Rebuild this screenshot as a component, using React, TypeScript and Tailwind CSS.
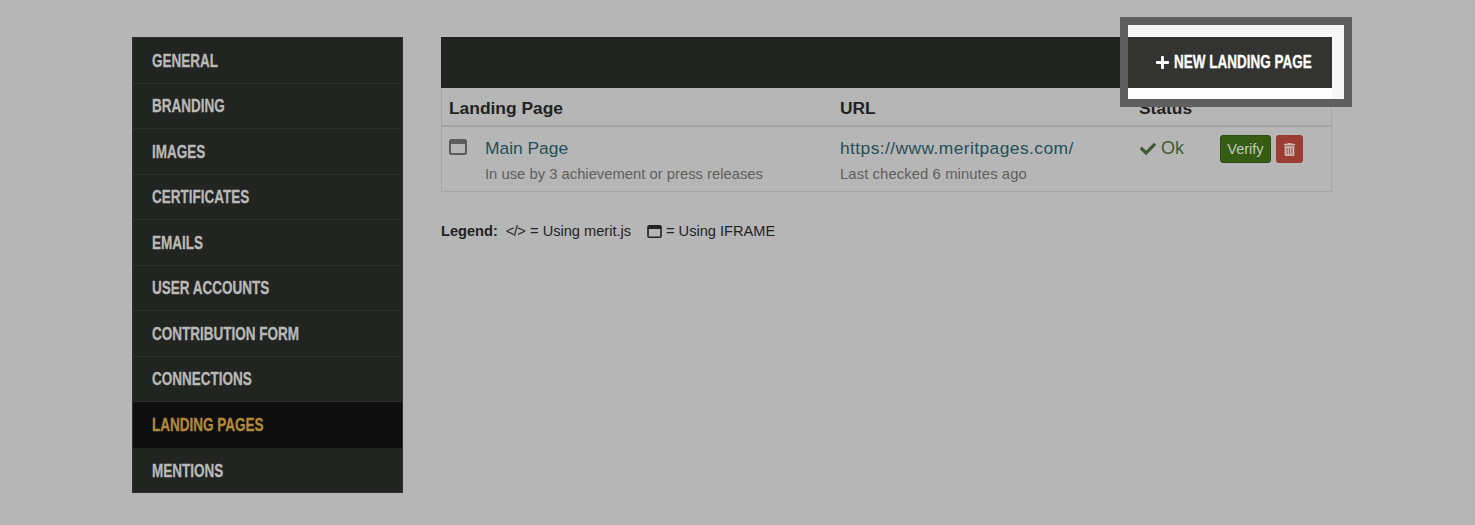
import { FaCheck, FaPlus, FaTrashAlt } from 'react-icons/fa'

const navItems = [
  'General',
  'Branding',
  'Images',
  'Certificates',
  'Emails',
  'User Accounts',
  'Contribution Form',
  'Connections',
  'Landing Pages',
  'Mentions',
]

// no condensed face is installed, so squeeze the bold one
const condensed =
  'inline-block origin-left scale-x-[0.75] whitespace-nowrap text-[18px] font-bold uppercase [-webkit-text-stroke:0.3px_currentColor]'

function WindowIcon({ className }: { className: string }) {
  return (
    <svg viewBox="0 0 18 16" className={className} fill="currentColor">
      <path
        fillRule="evenodd"
        d="M2.5 0h13A2.5 2.5 0 0 1 18 2.5v11a2.5 2.5 0 0 1-2.5 2.5h-13A2.5 2.5 0 0 1 0 13.500v-11A2.500 2.500 0 0 1 2.500 0zM2 5v8.500a.5.5 0 0 0 .5.5h13a.5.5 0 0 0 .5-.5V5z"
      />
    </svg>
  )
}

function Sidebar() {
  return (
    <nav className="h-[456px] w-[271px] shrink-0 overflow-hidden border border-[#2e302d] bg-[#222421]">
      {navItems.map((item) => {
        const active = item === 'Landing Pages'
        return (
          <a
            key={item}
            className={`flex h-[45.5px] items-center border-b pt-[2px] pl-[19px] last:border-b-0 ${
              active ? 'border-[#0e0e0e] bg-[#0e0e0e] text-[#b08a3c]' : 'border-[#2e302d] text-[#b9b9b9]'
            }`}
          >
            <span className={condensed}>{item}</span>
          </a>
        )
      })}
    </nav>
  )
}

function LandingTable() {
  return (
    <div className="border-x border-b border-[#a6a6a6]">
      <div className="flex h-[39px] items-center border-b-2 border-[#a4a4a4] pt-[3px] pl-[7px] text-[17.4px] font-bold text-[#222]">
        <div className="w-[391px]">Landing Page</div>
        <div className="w-[299px]">URL</div>
        <div>Status</div>
      </div>
      <div className="flex h-[64px] pl-[7px]">
        <div className="flex w-[391px] pt-[11px]">
          <WindowIcon className="mt-[1px] h-[16px] w-[18px] text-[#5c5c5c]" />
          <div className="ml-[18px]">
            <div className="text-[17.4px] leading-[20px] text-[#245059]">Main Page</div>
            <div className="mt-[7px] text-[14.8px] leading-[18px] text-[#5f5f5f]">In use by 3 achievement or press releases</div>
          </div>
        </div>
        <div className="w-[299px] pt-[11px]">
          <div className="text-[17.4px] leading-[20px] tracking-[0.42px] text-[#245059]">https://www.meritpages.com/</div>
          <div className="mt-[7px] text-[14.8px] leading-[18px] tracking-[0.1px] text-[#5f5f5f]">Last checked 6 minutes ago</div>
        </div>
        <div className="flex w-[81px] items-start gap-[5px] pt-[11px] text-[18px] leading-[20px] text-[#3e5c33]">
          <FaCheck className="mt-[3px] ml-[1px] h-[16px] w-[16px]" />
          Ok
        </div>
        <div className="flex gap-[5px] pt-[8px]">
          <button className="h-[28px] w-[51px] rounded-[3px] border border-[#2a4a10] bg-[#355c12] pt-[1px] text-[14.5px] text-[#c4c9bc]">Verify</button>
          <button className="flex h-[28px] w-[27px] items-center justify-center rounded-[3px] bg-[#9c3d33] text-[#c9b5b1]">
            <FaTrashAlt className="h-[13px] w-[13px]" />
          </button>
        </div>
      </div>
    </div>
  )
}

export default function App() {
  return (
    <div className="relative flex h-[525px] w-[1475px] gap-[38px] overflow-hidden bg-[#b6b6b6] pt-[37px] pl-[132px] [font-family:'Liberation_Sans',sans-serif]">
      <Sidebar />
      <main className="w-[891px]">
        <div className="h-[51px] bg-[#222421]" />
        <LandingTable />
        <div className="mt-[29px] flex items-center text-[14.6px] text-[#222]">
          <b>Legend:</b>
          <span className="ml-[8px] tracking-[-0.6px]">&lt;/&gt;</span>
          <span className="ml-[5px]">= Using merit.js</span>
          <WindowIcon className="ml-[16px] h-[13px] w-[15px] text-[#222]" />
          <span className="ml-[4px]">= Using IFRAME</span>
        </div>
      </main>

      {/* tour highlight over the button */}
      <div className="absolute top-[17px] left-[1120px] h-[90px] w-[232px] border-[8px] border-[#5f5f5f] bg-[#f7f7f7]">
        <div className="h-[12px]" />
        <a className="flex h-[51px] w-[204px] items-center gap-[4px] bg-[#333432] pl-[27px] text-white">
          <FaPlus className="h-[15px] w-[15px] shrink-0" />
          <span className={condensed}>New Landing Page</span>
        </a>
        <div className="h-[11px] w-[204px] bg-white" />
      </div>
    </div>
  )
}
